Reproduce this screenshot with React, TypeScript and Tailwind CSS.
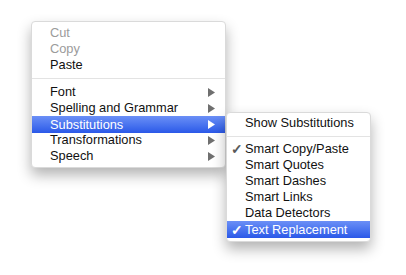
import React from 'react';

type Item = { label: string; disabled?: boolean; sub?: boolean; active?: boolean; checked?: boolean };

const Arrow = ({ white }: { white?: boolean }) => (
  <svg width="7" height="9" viewBox="0 0 7 9" className="shrink-0">
    <path d="M0 0 L7 4.5 L0 9 Z" fill={white ? '#ffffff' : '#6f6f6f'} />
  </svg>
);

const Row = ({ item }: { item: Item }) => {
  const base = 'flex items-center h-[16px] pr-[10px]';
  if (item.active) {
    return (
      <div className={`${base} h-[17px] -mb-px bg-gradient-to-b from-[#6b8ff6] to-[#2b58e8] text-white`}>
        <span className="w-[18px] text-center text-[14px] leading-none font-bold pl-[2px]">{item.checked ? '✓' : ''}</span>
        <span className="flex-1">{item.label}</span>
        {item.sub && <Arrow white />}
      </div>
    );
  }
  return (
    <div className={`${base} ${item.disabled ? 'text-[#9b9b9b]' : 'text-[#111]'}`}>
      <span className="w-[18px] text-center text-[14px] leading-none font-bold text-[#5a5a5a] pl-[2px]">{item.checked ? '✓' : ''}</span>
      <span className="flex-1">{item.label}</span>
      {item.sub && <Arrow />}
    </div>
  );
};

const Sep = ({ h }: { h: string }) => (
  <div className={`flex items-center ${h}`}>
    <div className="h-px w-full bg-[#e3e3e3]" />
  </div>
);

export default function App() {
  const font = { fontFamily: '"Liberation Sans", Arial, sans-serif' };
  return (
    <div className="w-[406px] h-[275px] bg-white flex items-start pl-[31px] pt-[21px] text-[12.8px] leading-[16px]" style={font}>
      <div className="w-[195px] bg-white border border-[#dadada] rounded-[4px] pt-[3px] pb-[3px] shadow-[0_7px_14px_rgba(0,0,0,0.3)] relative z-10">
        {[{ label: 'Cut', disabled: true }, { label: 'Copy', disabled: true }, { label: 'Paste' }].map(i => (
          <Row key={i.label} item={i} />
        ))}
        <Sep h="h-[11px]" />
        {[
          { label: 'Font', sub: true },
          { label: 'Spelling and Grammar', sub: true },
          { label: 'Substitutions', sub: true, active: true },
          { label: 'Transformations', sub: true },
          { label: 'Speech', sub: true },
        ].map(i => (
          <Row key={i.label} item={i} />
        ))}
      </div>
      <div className="w-[145px] mt-[91px] bg-white border border-[#dadada] rounded-[4px] pt-[2px] pb-[4px] shadow-[0_7px_14px_rgba(0,0,0,0.3)] relative z-20">
        <Row item={{ label: 'Show Substitutions' }} />
        <Sep h="h-[10px]" />
        {[
          { label: 'Smart Copy/Paste', checked: true },
          { label: 'Smart Quotes' },
          { label: 'Smart Dashes' },
          { label: 'Smart Links' },
          { label: 'Data Detectors' },
          { label: 'Text Replacement', checked: true, active: true },
        ].map(i => (
          <Row key={i.label} item={i} />
        ))}
      </div>
    </div>
  );
}
